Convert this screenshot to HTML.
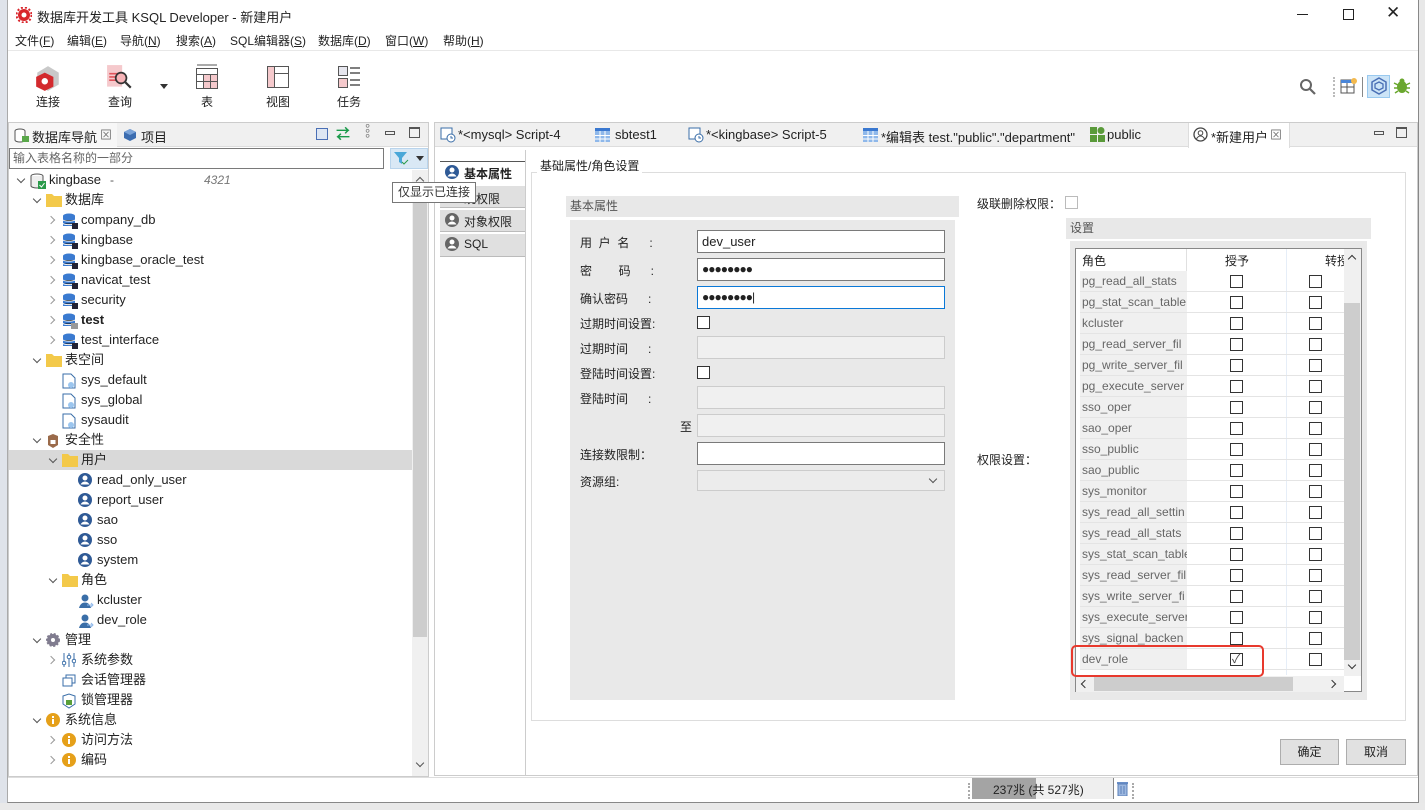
<!DOCTYPE html>
<html><head><meta charset="utf-8">
<style>
*{box-sizing:border-box;margin:0;padding:0}
body{width:1425px;height:810px;overflow:hidden;background:#e8e8e8;font-family:"Liberation Sans","Noto Sans CJK SC",sans-serif;font-size:12px;color:#222;position:relative}
.a{position:absolute;white-space:nowrap}
.win{position:absolute;left:7px;top:0;width:1412px;height:803px;background:#fff;border-right:1px solid #888;border-bottom:1px solid #888;border-left:1px solid #aaa}
.t{line-height:20px;height:20px}
.cb{position:absolute;width:13px;height:13px;border:1px solid #333;background:#fff}
.inp{position:absolute;height:23px;border:1px solid #7a7a7a;background:#fff;font-size:13px;line-height:21px;padding-left:4px}
.dis{position:absolute;height:23px;border:1px solid #ccc;background:#f0f0f0}
.arr{position:absolute;width:6px;height:6px;border-right:1.5px solid #555;border-bottom:1.5px solid #555}
.dn{transform:rotate(45deg)}
.lbl{position:absolute;font-size:12px;color:#222}
.row{position:absolute;left:1080px;width:264px;height:21px;border-bottom:1px solid #e4e4e4}
.rn{position:absolute;left:0;top:0;width:107px;height:20px;background:#f0f0f0;color:#666;font-size:12px;line-height:20px;padding-left:2px;overflow:hidden}
</style></head><body>
<div class="a" style="left:0;top:0;width:7px;height:810px;background:#dfe3ea"></div>
<div class="win"></div>
<svg class="a" style="left:16px;top:7px" width="16" height="16" viewBox="0 0 16 16"><circle cx="8" cy="8" r="6" fill="#d9262c"/><circle cx="8" cy="8" r="7.5" fill="none" stroke="#d9262c" stroke-width="2" stroke-dasharray="2 2"/><circle cx="8" cy="8" r="2.5" fill="#fff"/></svg>
<div class="a" style="left:37px;top:7px;font-size:13px">数据库开发工具 KSQL Developer - 新建用户</div>
<div class="a" style="left:1297px;top:14px;width:11px;height:1px;background:#222"></div>
<div class="a" style="left:1343px;top:9px;width:11px;height:11px;border:1px solid #222"></div>
<div class="a" style="left:1386px;top:3px;font-size:17px">✕</div>
<div class="a" style="top:32px;left:15px">文件(<u>F</u>)</div>
<div class="a" style="top:32px;left:67px">编辑(<u>E</u>)</div>
<div class="a" style="top:32px;left:120px">导航(<u>N</u>)</div>
<div class="a" style="top:32px;left:176px">搜索(<u>A</u>)</div>
<div class="a" style="top:32px;left:230px">SQL编辑器(<u>S</u>)</div>
<div class="a" style="top:32px;left:318px">数据库(<u>D</u>)</div>
<div class="a" style="top:32px;left:385px">窗口(<u>W</u>)</div>
<div class="a" style="top:32px;left:443px">帮助(<u>H</u>)</div>
<div class="a" style="left:8px;top:50px;width:1410px;height:1px;background:#e8e8e8"></div>
<svg class="a" style="left:34px;top:64px" width="28" height="28" viewBox="0 0 26 26"><polygon points="13,2 23,8 23,19 13,25 3,19 3,8" fill="#c9c9c9"/><polygon points="10,8 18,12 18,21 10,25 2,21 2,12" fill="#d32a2e"/><circle cx="10" cy="16" r="3" fill="#fff"/></svg>
<div class="a" style="left:36px;top:93px">连接</div>
<svg class="a" style="left:106px;top:64px" width="28" height="28" viewBox="0 0 26 26"><rect x="1" y="1" width="14" height="20" fill="#f5c9cc"/><path d="M3 9h8M3 12h7M3 15h8" stroke="#e0555c" stroke-width="1.5"/><circle cx="14" cy="13" r="5" fill="#f7b4b8" stroke="#333" stroke-width="1.6"/><path d="M18 17l5 5" stroke="#333" stroke-width="2"/></svg>
<div class="a" style="left:108px;top:93px">查询</div>
<div class="a" style="left:160px;top:84px;border:4px solid transparent;border-top:5px solid #333"></div>
<svg class="a" style="left:195px;top:64px" width="24" height="26" viewBox="0 0 24 26"><path d="M2 1h20" stroke="#555"/><rect x="1.5" y="4.5" width="21" height="20" fill="#fff" stroke="#555"/><rect x="9" y="11" width="6" height="13" fill="#f5c9cc"/><rect x="15" y="11" width="7" height="13" fill="#f5c9cc"/><path d="M1.5 10.5h21M1.5 17.5h21M8.5 10.5v14M15.5 10.5v14" stroke="#555"/></svg>
<div class="a" style="left:201px;top:93px">表</div>
<svg class="a" style="left:266px;top:65px" width="24" height="24" viewBox="0 0 24 24"><rect x="1.5" y="1.5" width="21" height="21" fill="#fff" stroke="#555"/><rect x="2" y="2" width="6" height="20" fill="#f5c9cc"/><path d="M8.5 1.5v21M8.5 8.5h14" stroke="#555"/></svg>
<div class="a" style="left:266px;top:93px">视图</div>
<svg class="a" style="left:337px;top:65px" width="24" height="24" viewBox="0 0 24 24"><rect x="1.5" y="1.5" width="9" height="9" fill="#e6e6ee" stroke="#555"/><rect x="1.5" y="13.5" width="9" height="9" fill="#f5c9cc" stroke="#555"/><path d="M13 3h10M13 8h10M13 15h10M13 20h10" stroke="#555" stroke-width="1.5"/></svg>
<div class="a" style="left:337px;top:93px">任务</div>
<svg class="a" style="left:1299px;top:78px" width="18" height="18" viewBox="0 0 18 18"><circle cx="7" cy="7" r="5" fill="none" stroke="#666" stroke-width="2"/><path d="M11 11l5 5" stroke="#666" stroke-width="2.2"/></svg>
<div class="a" style="left:1333px;top:77px;width:2px;height:20px;border-left:2px dotted #bbb"></div>
<svg class="a" style="left:1340px;top:77px" width="18" height="18" viewBox="0 0 18 18"><rect x="1" y="3" width="13" height="13" fill="#fff" stroke="#555"/><rect x="1" y="3" width="13" height="3" fill="#4a86d8"/><path d="M1 10h13M7 6v10" stroke="#555"/><circle cx="14" cy="4" r="3" fill="#f3b94d"/></svg>
<div class="a" style="left:1362px;top:77px;width:1px;height:20px;background:#888"></div>
<div class="a" style="left:1367px;top:75px;width:23px;height:23px;background:#cce4f7;border:1px solid #99c9ef"></div>
<svg class="a" style="left:1370px;top:77px" width="18" height="18" viewBox="0 0 18 18"><polygon points="9,1 16,5 16,13 9,17 2,13 2,5" fill="none" stroke="#4a6fb5" stroke-width="1.5"/><polygon points="9,5 13,7 13,11 9,13 5,11 5,7" fill="none" stroke="#4a6fb5" stroke-width="1.3"/></svg>
<svg class="a" style="left:1392px;top:77px" width="20" height="18" viewBox="0 0 20 18"><ellipse cx="10" cy="10" rx="5" ry="6" fill="#6aa72e"/><circle cx="10" cy="4" r="2.5" fill="#6aa72e"/><path d="M2 6l4 2M2 11h4M3 16l3-2M18 6l-4 2M18 11h-4M17 16l-3-2" stroke="#6aa72e" stroke-width="1.5"/></svg>
<div class="a" style="left:8px;top:122px;width:421px;height:655px;border:1px solid #ccc;background:#fff"></div>
<div class="a" style="left:9px;top:123px;width:419px;height:24px;background:#f0f0f0;border-bottom:1px solid #ddd"></div>
<div class="a" style="left:9px;top:123px;width:108px;height:24px;background:#f7f7f7"></div>
<svg class="a" style="left:14px;top:128px" width="16" height="15" viewBox="0 0 16 15"><ellipse cx="6" cy="3" rx="5" ry="2" fill="#fff" stroke="#555"/><path d="M1 3v9c0 1 2 2 5 2s5-1 5-2V3" fill="#fff" stroke="#555"/><rect x="8" y="8" width="7" height="6" fill="#5aa84a"/></svg>
<div class="a" style="left:32px;top:127px;font-size:13px">数据库导航</div>
<div class="a" style="left:100px;top:126px;color:#777">⊠</div>
<svg class="a" style="left:123px;top:128px" width="14" height="14" viewBox="0 0 14 14"><polygon points="7,1 13,4 13,10 7,13 1,10 1,4" fill="#3c6db0"/><polygon points="7,1 13,4 7,7 1,4" fill="#7aa3d8"/></svg>
<div class="a" style="left:141px;top:127px;font-size:13px">项目</div>
<div class="a" style="left:316px;top:128px;width:12px;height:12px;border:1px solid #4a6fb5;background:#dde6f3"></div>
<div class="a" style="left:336px;top:124px;color:#1a9a4a;font-size:14px;font-weight:bold">⇄</div>
<div class="a" style="left:365px;top:126px;color:#777;font-size:13px;line-height:5px">°<br>°<br>°</div>
<div class="a" style="left:385px;top:131px;width:10px;height:4px;border:1px solid #555"></div>
<div class="a" style="left:409px;top:127px;width:11px;height:11px;border:1px solid #555;border-top-width:2px"></div>
<div class="a" style="left:9px;top:148px;width:375px;height:21px;border:1px solid #7a7a7a;background:#fff;color:#666;padding-left:3px;line-height:19px">输入表格名称的一部分</div>
<div class="a" style="left:390px;top:148px;width:38px;height:21px;background:#d9e8f5;border:1px solid #b9d4ec"></div>
<svg class="a" style="left:393px;top:150px" width="16" height="16" viewBox="0 0 16 16"><path d="M1 2h13l-5 6v6l-3-2V8z" fill="#4aa7d8"/><path d="M9 12l2 2 4-4" stroke="#2a9a4a" fill="none"/></svg>
<div class="a" style="left:416px;top:156px;border:4px solid transparent;border-top:5px solid #333"></div>
<div class="a" style="left:9px;top:450px;width:403px;height:20px;background:#d9d9d9"></div>
<div class="a" style="left:412px;top:170px;width:16px;height:606px;background:#f0f0f0"></div>
<div class="a" style="left:413px;top:185px;width:14px;height:452px;background:#cdcdcd"></div>
<div class="arr" style="left:417px;top:178px;transform:rotate(225deg)"></div>
<div class="arr dn" style="left:417px;top:760px"></div>
<div class="a" style="left:9px;top:170px;width:403px;height:602px;overflow:hidden"><div id="tree" class="a" style="left:-9px;top:-170px;width:420px;height:800px"></div></div>
<div class="a" style="left:434px;top:122px;width:984px;height:654px;border:1px solid #ccc;background:#fff"></div>
<div class="a" style="left:435px;top:123px;width:982px;height:24px;background:#f0f0f0;border-bottom:1px solid #ddd"></div>
<div class="a" style="left:1188px;top:123px;width:102px;height:25px;background:#fff;border-left:1px solid #ddd;border-right:1px solid #ddd"></div>
<svg class="a" style="left:440px;top:127px" width="16" height="16" viewBox="0 0 16 16"><rect x="1" y="1" width="11" height="11" fill="#fff" stroke="#3a6ea8"/><circle cx="11" cy="11" r="4" fill="#fff" stroke="#3a6ea8"/><path d="M11 9v2h2" stroke="#3a6ea8" fill="none"/></svg>
<div class="a" style="left:458px;top:127px;font-size:13px">*&lt;mysql&gt; Script-4</div>
<svg class="a" style="left:595px;top:128px" width="15" height="14" viewBox="0 0 15 14"><rect width="15" height="14" fill="#8fb8ea"/><rect width="15" height="3" fill="#3a78d0"/><path d="M0 7.5h15M0 11h15M5 3v11M10 3v11" stroke="#fff"/></svg>
<div class="a" style="left:615px;top:127px;font-size:13px">sbtest1</div>
<svg class="a" style="left:688px;top:127px" width="16" height="16" viewBox="0 0 16 16"><rect x="1" y="1" width="11" height="11" fill="#fff" stroke="#3a6ea8"/><circle cx="11" cy="11" r="4" fill="#fff" stroke="#3a6ea8"/><path d="M11 9v2h2" stroke="#3a6ea8" fill="none"/></svg>
<div class="a" style="left:706px;top:127px;font-size:13px">*&lt;kingbase&gt; Script-5</div>
<svg class="a" style="left:863px;top:128px" width="15" height="14" viewBox="0 0 15 14"><rect width="15" height="14" fill="#8fb8ea"/><rect width="15" height="3" fill="#3a78d0"/><path d="M0 7.5h15M0 11h15M5 3v11M10 3v11" stroke="#fff"/></svg>
<div class="a" style="left:881px;top:127px;font-size:13px">*编辑表 test."public"."department"</div>
<svg class="a" style="left:1090px;top:127px" width="15" height="15" viewBox="0 0 15 15"><rect x="0" y="0" width="7" height="7" fill="#5a9a3a"/><circle cx="11" cy="3.5" r="3.5" fill="#5a9a3a"/><rect x="0" y="8" width="7" height="7" fill="#5a9a3a"/><rect x="8" y="8" width="7" height="7" fill="#5a9a3a"/></svg>
<div class="a" style="left:1107px;top:127px;font-size:13px">public</div>
<svg class="a" style="left:1193px;top:127px" width="15" height="15" viewBox="0 0 15 15"><circle cx="7.5" cy="7.5" r="6.5" fill="none" stroke="#444" stroke-width="1.3"/><circle cx="7.5" cy="6" r="2.3" fill="none" stroke="#444"/><path d="M3.5 12c1-2 2.5-3 4-3s3 1 4 3" fill="none" stroke="#444"/></svg>
<div class="a" style="left:1211px;top:127px;font-size:13px">*新建用户</div>
<div class="a" style="left:1270px;top:126px;color:#777">⊠</div>
<div class="a" style="left:1374px;top:131px;width:10px;height:4px;border:1px solid #555"></div>
<div class="a" style="left:1396px;top:127px;width:11px;height:11px;border:1px solid #555;border-top-width:2px"></div>
<div class="a" style="left:440px;top:152px;width:85px;height:10px;border-bottom:1px solid #555"></div>
<div class="a" style="left:525px;top:150px;width:1px;height:625px;background:#ccc"></div>
<div class="a" style="left:440px;top:186px;width:85px;height:22px;background:#e0e0e0;border-bottom:1px solid #bbb"></div>
<div class="a" style="left:440px;top:210px;width:85px;height:22px;background:#e0e0e0;border-bottom:1px solid #bbb"></div>
<div class="a" style="left:440px;top:234px;width:85px;height:23px;background:#e0e0e0;border-bottom:1px solid #bbb"></div>
<svg class="a" style="left:445px;top:165px" width="14" height="14" viewBox="0 0 14 14"><circle cx="7" cy="7" r="7" fill="#2f5a96"/><circle cx="7" cy="5" r="2.5" fill="#fff"/><path d="M2.5 11.5c1-2 2.7-3 4.5-3s3.5 1 4.5 3" fill="#fff"/></svg>
<div class="a" style="left:464px;top:165px;font-weight:bold">基本属性</div>
<div class="a" style="left:464px;top:190px">统权限</div>
<svg class="a" style="left:445px;top:213px" width="14" height="14" viewBox="0 0 14 14"><circle cx="7" cy="7" r="7" fill="#666"/><circle cx="7" cy="5" r="2.5" fill="#fff"/><path d="M2.5 11.5c1-2 2.7-3 4.5-3s3.5 1 4.5 3" fill="#fff"/></svg>
<div class="a" style="left:464px;top:213px">对象权限</div>
<svg class="a" style="left:445px;top:237px" width="14" height="14" viewBox="0 0 14 14"><circle cx="7" cy="7" r="7" fill="#666"/><circle cx="7" cy="5" r="2.5" fill="#fff"/><path d="M2.5 11.5c1-2 2.7-3 4.5-3s3.5 1 4.5 3" fill="#fff"/></svg>
<div class="a" style="left:464px;top:237px">SQL</div>
<div class="a" style="left:392px;top:182px;width:84px;height:21px;background:#fff;border:1px solid #777;line-height:19px;padding-left:5px;color:#333">仅显示已连接</div>
<div class="a" style="left:531px;top:172px;width:875px;height:549px;border:1px solid #ddd"></div>
<div class="a" style="left:537px;top:157px;background:#fff;padding:0 3px">基础属性/角色设置</div>
<div class="a" style="left:566px;top:196px;width:393px;height:21px;background:#e8e8e8;color:#555;line-height:21px;padding-left:4px">基本属性</div>
<div class="a" style="left:570px;top:220px;width:385px;height:480px;background:#e9e9e9"></div>
<div class="lbl" style="left:580px;top:234px">用&nbsp;&nbsp;户&nbsp;&nbsp;名&nbsp;&nbsp;&nbsp;&nbsp;&nbsp;&nbsp;:</div>
<div class="lbl" style="left:580px;top:262px">密&nbsp;&nbsp;&nbsp;&nbsp;&nbsp;&nbsp;&nbsp;&nbsp;码&nbsp;&nbsp;&nbsp;&nbsp;&nbsp;&nbsp;:</div>
<div class="lbl" style="left:580px;top:290px">确认密码&nbsp;&nbsp;&nbsp;&nbsp;&nbsp;&nbsp;:</div>
<div class="inp" style="left:697px;top:230px;width:248px">dev_user</div>
<div class="inp" style="left:697px;top:258px;width:248px;letter-spacing:-1px;font-size:12px">●●●●●●●●</div>
<div class="inp" style="left:697px;top:286px;width:248px;border-color:#0a78d7;letter-spacing:-1px;font-size:12px">●●●●●●●●|</div>
<div class="lbl" style="left:580px;top:315px">过期时间设置:</div>
<div class="cb" style="left:697px;top:316px"></div>
<div class="lbl" style="left:580px;top:340px">过期时间&nbsp;&nbsp;&nbsp;&nbsp;&nbsp;&nbsp;:</div>
<div class="dis" style="left:697px;top:336px;width:248px"></div>
<div class="lbl" style="left:580px;top:365px">登陆时间设置:</div>
<div class="cb" style="left:697px;top:366px"></div>
<div class="lbl" style="left:580px;top:390px">登陆时间&nbsp;&nbsp;&nbsp;&nbsp;&nbsp;&nbsp;:</div>
<div class="dis" style="left:697px;top:386px;width:248px"></div>
<div class="lbl" style="left:680px;top:418px">至</div>
<div class="dis" style="left:697px;top:414px;width:248px"></div>
<div class="lbl" style="left:580px;top:446px">连接数限制：</div>
<div class="inp" style="left:697px;top:442px;width:248px"></div>
<div class="lbl" style="left:580px;top:473px">资源组:</div>
<div class="dis" style="left:697px;top:470px;width:248px;height:21px;background:#ececec"></div>
<div class="arr dn" style="left:930px;top:476px"></div>
<div class="lbl" style="left:977px;top:195px">级联删除权限：</div>
<div class="cb" style="left:1065px;top:196px;border-color:#bbb"></div>
<div class="lbl" style="left:977px;top:451px">权限设置：</div>
<div class="a" style="left:1066px;top:218px;width:305px;height:21px;background:#e8e8e8;color:#555;line-height:21px;padding-left:4px">设置</div>
<div class="a" style="left:1070px;top:241px;width:297px;height:459px;background:#e9e9e9"></div>
<div class="a" style="left:1075px;top:248px;width:287px;height:444px;border:1px solid #888;background:#fff"></div>
<div class="a" style="left:1082px;top:252px">角色</div>
<div class="a" style="left:1225px;top:252px">授予</div>
<div class="a" style="left:1325px;top:252px">转授</div>
<div class="a" style="left:1186px;top:249px;width:1px;height:22px;background:#e0e0e0"></div>
<div class="a" style="left:1286px;top:249px;width:1px;height:426px;background:#e6eef8"></div>
<div class="a" style="left:1344px;top:249px;width:17px;height:427px;background:#f0f0f0"></div>
<div class="a" style="left:1344px;top:303px;width:16px;height:357px;background:#cdcdcd"></div>
<div class="arr" style="left:1349px;top:256px;transform:rotate(225deg);border-color:#333"></div>
<div class="arr dn" style="left:1349px;top:662px;border-color:#333"></div>
<div class="a" style="left:1076px;top:676px;width:268px;height:16px;background:#f0f0f0"></div>
<div class="a" style="left:1094px;top:677px;width:199px;height:14px;background:#cdcdcd"></div>
<div class="arr" style="left:1082px;top:681px;transform:rotate(135deg);border-color:#333"></div>
<div class="arr" style="left:1329px;top:681px;transform:rotate(-45deg);border-color:#333"></div>
<div id="rows"></div>
<div class="a" style="left:1071px;top:645px;width:193px;height:32px;border:2px solid #e8392d;border-radius:5px"></div>
<div class="a" style="left:1280px;top:739px;width:59px;height:26px;background:#e1e1e1;border:1px solid #adadad;text-align:center;line-height:24px">确定</div>
<div class="a" style="left:1346px;top:739px;width:60px;height:26px;background:#e1e1e1;border:1px solid #adadad;text-align:center;line-height:24px">取消</div>
<div class="a" style="left:8px;top:777px;width:1410px;height:1px;background:#ddd"></div>
<div class="a" style="left:968px;top:783px;height:16px;border-left:2px dotted #aaa"></div>
<div class="a" style="left:972px;top:778px;width:141px;height:21px;background:#efefef"></div>
<div class="a" style="left:972px;top:778px;width:64px;height:21px;background:#a4a4a4"></div>
<div class="a" style="left:993px;top:781px">237兆 (共 527兆)</div>
<div class="a" style="left:1113px;top:778px;width:1px;height:21px;background:#888"></div>
<svg class="a" style="left:1116px;top:781px" width="13" height="15" viewBox="0 0 13 15"><rect x="1" y="1" width="11" height="2" fill="#6a8fc8"/><rect x="2" y="3" width="9" height="12" fill="#9db8e0" stroke="#5a7fb8"/><path d="M5 5v8M8 5v8" stroke="#5a7fb8"/></svg>
<div class="a" style="left:1132px;top:783px;height:16px;border-left:2px dotted #aaa"></div>
<div class="a" style="left:0;top:803px;width:1425px;height:7px;background:#e9e9e9"></div>
<script>
var T=[
[0,'kingbase','conn',1],[1,'数据库','fold',1],[2,'company_db','db',0],[2,'kingbase','db',0],[2,'kingbase_oracle_test','db',0],[2,'navicat_test','db',0],[2,'security','db',0],[2,'test','dbb',0],[2,'test_interface','db',0],
[1,'表空间','fold',1],[2,'sys_default','ts',-1],[2,'sys_global','ts',-1],[2,'sysaudit','ts',-1],[1,'安全性','lock',1],[2,'用户','fold',1],
[3,'read_only_user','user',-1],[3,'report_user','user',-1],[3,'sao','user',-1],[3,'sso','user',-1],[3,'system','user',-1],[2,'角色','fold',1],[3,'kcluster','role',-1],[3,'dev_role','role',-1],
[1,'管理','gear',1],[2,'系统参数','param',0],[2,'会话管理器','sess',-1],[2,'锁管理器','lk',-1],[1,'系统信息','info',1],[2,'访问方法','info',0],[2,'编码','info',0],[2,'排序规则','info',0]];
var ic={conn:'<svg width="16" height="16"><ellipse cx="7" cy="3" rx="6" ry="2" fill="#fff" stroke="#555"/><path d="M1 3v10c0 1 3 2 6 2s6-1 6-2V3" fill="#eee" stroke="#555"/><rect x="8" y="8" width="8" height="8" fill="#2a9a4a"/><path d="M9.5 12l2 2 3-4" stroke="#fff" fill="none"/></svg>',
fold:'<svg width="16" height="14"><path d="M0 1h6l2 2h8v11H0z" fill="#f3c94a"/></svg>',
db:'<svg width="16" height="16"><ellipse cx="7" cy="3" rx="6" ry="2.5" fill="#3a7ad0"/><rect x="1" y="3" width="12" height="10" fill="#3a7ad0"/><path d="M1 7c2 1.5 10 1.5 12 0M1 10.5c2 1.5 10 1.5 12 0" stroke="#fff"/><rect x="10" y="10" width="6" height="6" fill="#223"/></svg>',
dbb:'<svg width="16" height="16"><ellipse cx="7" cy="3" rx="6" ry="2.5" fill="#3a7ad0"/><rect x="1" y="3" width="12" height="10" fill="#3a7ad0"/><path d="M1 7c2 1.5 10 1.5 12 0M1 10.5c2 1.5 10 1.5 12 0" stroke="#fff"/><rect x="9" y="10" width="7" height="6" fill="#999"/></svg>',
ts:'<svg width="14" height="16"><path d="M1 1h8l4 4v10H1z" fill="#fff" stroke="#3a6ea8"/><circle cx="9" cy="12" r="3" fill="#9cc6ef"/></svg>',
lock:'<svg width="14" height="16"><path d="M2 3l5-2 5 2v9l-5 3-5-3z" fill="#9a6a4a"/><rect x="4.5" y="7" width="5" height="4" fill="#fff"/></svg>',
user:'<svg width="14" height="14"><circle cx="7" cy="7" r="7" fill="#2f5a96"/><circle cx="7" cy="5" r="2.5" fill="#fff"/><path d="M2.5 11.5c1-2 2.7-3 4.5-3s3.5 1 4.5 3" fill="#fff"/></svg>',
role:'<svg width="16" height="16"><circle cx="7" cy="5" r="3.5" fill="#3a6ea8"/><path d="M1 15c1-4 3.5-5.5 6-5.5s5 1.5 6 5.5z" fill="#3a6ea8"/><path d="M9 12h6M13 10l2 2-2 2" stroke="#8fb8ea" fill="none"/></svg>',
gear:'<svg width="14" height="14"><circle cx="7" cy="7" r="6" fill="#807c8f" stroke="#807c8f" stroke-width="2" stroke-dasharray="2 1.6"/><circle cx="7" cy="7" r="2" fill="#fff"/></svg>',
param:'<svg width="14" height="14"><path d="M2 0v14M7 0v14M12 0v14" stroke="#3a6ea8"/><circle cx="2" cy="10" r="1.8" fill="#fff" stroke="#3a6ea8"/><circle cx="7" cy="4" r="1.8" fill="#fff" stroke="#3a6ea8"/><circle cx="12" cy="8" r="1.8" fill="#fff" stroke="#3a6ea8"/></svg>',
sess:'<svg width="14" height="14"><rect x="1" y="5" width="9" height="8" fill="#fff" stroke="#3a6ea8"/><path d="M4 5V2h9v8h-3" fill="none" stroke="#3a6ea8"/></svg>',
lk:'<svg width="14" height="16"><path d="M1 3l6-2 6 2v8l-6 4-6-4z" fill="#fff" stroke="#3a6ea8"/><rect x="4" y="7" width="6" height="5" fill="#5aa03a"/></svg>',
info:'<svg width="14" height="14"><circle cx="7" cy="7" r="7" fill="#e5a01a"/><rect x="6" y="6" width="2" height="5" fill="#fff"/><rect x="6" y="3" width="2" height="2" fill="#fff"/></svg>'};
var h='';T.forEach(function(r,i){var y=170+i*20,x=17+r[0]*16;
if(r[3]==1)h+='<div class="arr dn" style="left:'+(x+1)+'px;top:'+(y+6)+'px"></div>';
if(r[3]==0)h+='<div class="arr" style="left:'+(x-1)+'px;top:'+(y+7)+'px;transform:rotate(-45deg);border-color:#999"></div>';
h+='<div class="a" style="left:'+(x+13)+'px;top:'+(y+3)+'px">'+ic[r[2]]+'</div>';
h+='<div class="a t" style="left:'+(x+32)+'px;top:'+y+'px;font-size:13px;'+(r[1]=='test'?'font-weight:bold':'')+'">'+r[1]+'</div>';});
h+='<div class="a t" style="left:204px;top:170px;font-style:italic;color:#777">4321</div><div class="a t" style="left:110px;top:170px;color:#555">-</div>';
document.getElementById('tree').innerHTML=h;
var R=['pg_read_all_stats','pg_stat_scan_table','kcluster','pg_read_server_fil','pg_write_server_fil','pg_execute_server','sso_oper','sao_oper','sso_public','sao_public','sys_monitor','sys_read_all_settin','sys_read_all_stats','sys_stat_scan_table','sys_read_server_fil','sys_write_server_fi','sys_execute_server','sys_signal_backen','dev_role'];
var s='';R.forEach(function(n,i){var y=271+i*21;s+='<div class="row" style="top:'+y+'px"><div class="rn">'+n+'</div>'+
'<div class="cb" style="left:150px;top:4px"></div><div class="cb" style="left:229px;top:4px"></div>'+(n=='dev_role'?'<div class="a" style="left:152px;top:1px;color:#444">✓</div>':'')+'</div>';});
document.getElementById('rows').innerHTML=s;
</script>
</body></html>
